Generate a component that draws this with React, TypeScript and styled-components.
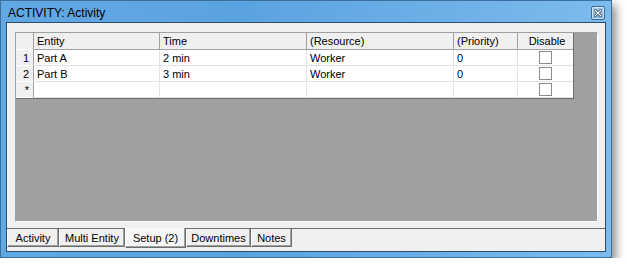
import React from 'react';
import styled, { createGlobalStyle } from 'styled-components';

const GlobalStyle = createGlobalStyle`
  html, body {
    margin: 0;
    padding: 0;
    background: #ffffff;
  }
  body {
    font-family: "Liberation Sans", Arial, sans-serif;
    font-size: 11px;
    color: #000;
  }
`;

interface Row {
  num: string;
  entity: string;
  time: string;
  resource: string;
  priority: string;
}

const rows: Row[] = [
  { num: '1', entity: 'Part A', time: '2 min', resource: 'Worker', priority: '0' },
  { num: '2', entity: 'Part B', time: '3 min', resource: 'Worker', priority: '0' },
  { num: '*', entity: '', time: '', resource: '', priority: '' },
];

const columns = [
  { label: 'Entity', width: 126 },
  { label: 'Time', width: 147 },
  { label: '(Resource)', width: 147 },
  { label: '(Priority)', width: 64 },
  { label: 'Disable', width: 55, center: true },
];

const tabs = [
  { label: 'Activity', width: 52 },
  { label: 'Multi Entity', width: 66 },
  { label: 'Setup (2)', width: 61, active: true },
  { label: 'Downtimes', width: 65 },
  { label: 'Notes', width: 41 },
];

const Window = styled.div`
  width: 612px;
  height: 258px;
  box-sizing: border-box;
  border: 1px solid #3b6f9e;
  background: linear-gradient(90deg, #62a8e3 0%, #5ba3e0 40%, #7cbbee 100%);
  box-shadow: 4px 5px 9px rgba(0, 0, 0, 0.45);
  display: flex;
  flex-direction: column;
`;

const TitleBar = styled.div`
  height: 21px;
  display: flex;
  align-items: center;
  justify-content: space-between;
  padding: 2px 6px 0 7px;
  box-sizing: border-box;
  font-family: "Liberation Sans", Arial, sans-serif;
  font-size: 12px;
  color: #000;
`;

const CloseButton = styled.div`
  width: 12px;
  height: 12px;
  margin-top: 1px;
  border: 1px solid #3d6a93;
  border-radius: 2px;
  background: linear-gradient(180deg, #a9d0f1, #79b2e3);
  box-shadow: inset 0 0 0 1px rgba(255, 255, 255, 0.55);
  display: flex;
  align-items: center;
  justify-content: center;
`;

const Client = styled.div`
  flex: 1;
  margin: 0 5px 5px 5px;
  border: 1px solid #2c4c6b;
  background: #f0f0f0;
  display: flex;
  flex-direction: column;
`;

const Workspace = styled.div`
  flex: 1;
  margin: 9px 7px 6px 8px;
  background: #a0a0a0;
  border-top: 1px solid #a0a0a0;
  border-left: 1px solid #a0a0a0;
  border-right: 1px solid #ffffff;
  border-bottom: 1px solid #ffffff;
`;

const Grid = styled.div`
  display: inline-flex;
  flex-direction: column;
  background: #ffffff;
  border-right: 1px solid #6d6d6d;
  border-bottom: 1px solid #6d6d6d;
`;

const GridRow = styled.div<{ $header?: boolean }>`
  display: flex;
  height: ${(p) => (p.$header ? 17 : 16)}px;
  background: ${(p) => (p.$header ? '#f0f0f0' : '#ffffff')};
`;

const RowHead = styled.div`
  width: 18px;
  box-sizing: border-box;
  background: #f0f0f0;
  border-right: 1px solid #a0a0a0;
  border-bottom: 1px solid #ffffff;
  text-align: right;
  padding-right: 4px;
  line-height: 16px;
`;

const Cell = styled.div<{ $w: number; $header?: boolean; $center?: boolean }>`
  width: ${(p) => p.$w}px;
  box-sizing: border-box;
  padding-left: 3px;
  line-height: ${(p) => (p.$header ? 17 : 16)}px;
  white-space: nowrap;
  overflow: hidden;
  border-right: 1px solid ${(p) => (p.$header ? '#a0a0a0' : '#e3e3e3')};
  border-bottom: 1px solid ${(p) => (p.$header ? '#a0a0a0' : '#e3e3e3')};
  display: flex;
  align-items: center;
  justify-content: ${(p) => (p.$center ? 'center' : 'flex-start')};
  &:last-child {
    border-right: none;
  }
`;

const CheckBox = styled.span`
  width: 11px;
  height: 11px;
  border: 1px solid #8a8a8a;
  background: #ffffff;
  margin-left: -3px;
`;

const TabStrip = styled.div`
  height: 22px;
  border-top: 1px solid #6d6d6d;
  display: flex;
  align-items: flex-start;
`;

const Tab = styled.div<{ $w: number; $active?: boolean }>`
  width: ${(p) => p.$w}px;
  box-sizing: border-box;
  height: ${(p) => (p.$active ? 20 : 18)}px;
  margin-top: ${(p) => (p.$active ? -1 : 0)}px;
  background: ${(p) => (p.$active ? '#f6f6f6' : '#f0f0f0')};
  border-left: 1px solid #ffffff;
  border-right: 1px solid #6d6d6d;
  border-bottom: 1px solid #6d6d6d;
  box-shadow: inset -1px -1px 0 #a0a0a0;
  display: flex;
  align-items: ${(p) => (p.$active ? 'flex-end' : 'center')};
  justify-content: center;
  padding-bottom: ${(p) => (p.$active ? 3 : 0)}px;
  font-size: 11px;
  white-space: nowrap;
`;

export default function App() {
  return (
    <>
      <GlobalStyle />
      <Window>
        <TitleBar>
          <span>ACTIVITY: Activity</span>
          <CloseButton>
            <svg width="8" height="8" viewBox="0 0 8 8">
              <path d="M1 1 L7 7 M7 1 L1 7" stroke="#1f3a55" strokeWidth="2.6" strokeLinecap="square" />
              <path d="M1 1 L7 7 M7 1 L1 7" stroke="#ffffff" strokeWidth="1.2" strokeLinecap="square" />
            </svg>
          </CloseButton>
        </TitleBar>
        <Client>
          <Workspace>
            <Grid>
              <GridRow $header>
                <RowHead />
                {columns.map((c) => (
                  <Cell key={c.label} $w={c.width} $header $center={c.center}>
                    {c.label}
                  </Cell>
                ))}
              </GridRow>
              {rows.map((r) => (
                <GridRow key={r.num}>
                  <RowHead>{r.num}</RowHead>
                  <Cell $w={126}>{r.entity}</Cell>
                  <Cell $w={147}>{r.time}</Cell>
                  <Cell $w={147}>{r.resource}</Cell>
                  <Cell $w={64}>{r.priority}</Cell>
                  <Cell $w={55} $center>
                    <CheckBox />
                  </Cell>
                </GridRow>
              ))}
            </Grid>
          </Workspace>
          <TabStrip>
            {tabs.map((t) => (
              <Tab key={t.label} $w={t.width} $active={t.active}>
                {t.label}
              </Tab>
            ))}
          </TabStrip>
        </Client>
      </Window>
    </>
  );
}
